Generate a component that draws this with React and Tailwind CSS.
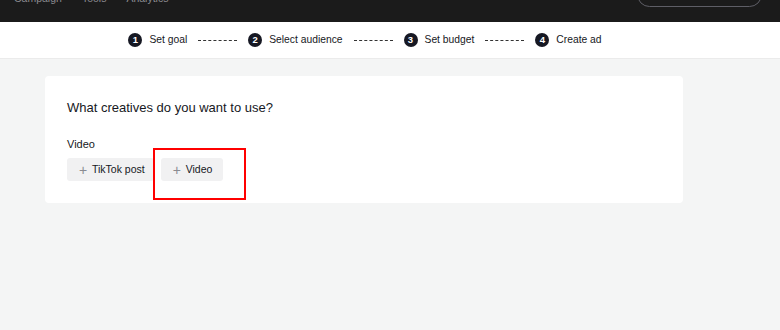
export default function App() {
  const steps = ['Set goal', 'Select audience', 'Set budget', 'Create ad'];
  return (
    <div className="w-[780px] h-[330px] overflow-hidden bg-[#f4f5f5] font-['Liberation_Sans',Arial,sans-serif] text-[#161823]">
      {/* top nav, scrolled mostly out of view */}
      <div className="h-[22px] bg-[#1b1b1b] relative overflow-hidden">
        <div className="flex items-end gap-[20px] pl-[14px] -mt-[9px] text-[10.5px] text-[#8a8a8f]">
          <span>Campaign</span>
          <span>Tools</span>
          <span>Analytics</span>
        </div>
        <div className="absolute left-[637px] top-[-18px] w-[125px] h-[25px] rounded-full border border-[#5e5e66] flex items-center justify-center text-[10.5px] text-[#9a9aa0]">
          Find Pending Services
        </div>
      </div>

      {/* stepper */}
      <div className="h-[37px] bg-white border-b border-[#ebebeb] flex items-center justify-center pr-[50px]">
        {steps.map((s, i) => (
          <div key={s} className="flex items-center">
            {i > 0 && <div className="w-[39px] border-t border-dashed border-[#333] mx-[11px]" />}
            <span className="w-[14px] h-[14px] rounded-full bg-[#161823] text-white text-[9.5px] font-bold flex items-center justify-center">{i + 1}</span>
            <span className="ml-[7px] text-[10.3px]">{s}</span>
          </div>
        ))}
      </div>

      {/* card */}
      <div className="ml-[45px] mt-[17px] w-[638px] bg-white rounded-[4px] px-[22px] pt-[22px] pb-[22px]">
        <h2 className="text-[13px] font-medium">What creatives do you want to use?</h2>
        <div className="mt-[18px] text-[11px]">Video</div>
        <div className="mt-[6px] flex gap-[7px] relative">
          <button className="h-[23px] pl-[12px] pr-[9px] bg-[#f1f1f2] rounded-[3px] flex items-center gap-[6px] text-[10.5px]">
            <span className="w-[7px] text-[#8a8b91] text-[14px] font-light leading-none">+</span>TikTok post
          </button>
          <button className="h-[23px] pl-[12px] pr-[11px] bg-[#f1f1f2] rounded-[3px] flex items-center gap-[6px] text-[10.5px]">
            <span className="w-[7px] text-[#8a8b91] text-[14px] font-light leading-none">+</span>Video
          </button>
          <div className="absolute left-[86px] top-[-10px] w-[93px] h-[52px] border-2 border-[#f00]" />
        </div>
      </div>
    </div>
  );
}
